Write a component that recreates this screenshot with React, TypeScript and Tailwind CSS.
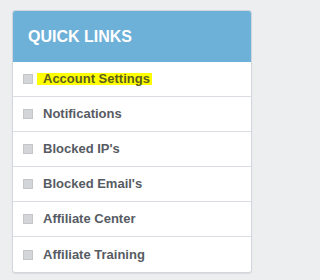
const links = [
  "Account Settings",
  "Notifications",
  "Blocked IP's",
  "Blocked Email's",
  "Affiliate Center",
  "Affiliate Training",
]

export default function App() {
  return (
    <div className="min-h-screen bg-[#eceef0] px-[12px] pt-[10px] font-['Liberation_Sans',Arial,sans-serif]">
      <div className="w-[240px] overflow-hidden rounded-[3px] border border-[#d3d6dc] bg-white shadow-[0_1px_1px_rgba(0,0,0,0.08)]">
        {/* Header */}
        <div className="flex h-[51px] items-center bg-[#6db0d8] pl-[15px]">
          <h3 className="text-[16px] font-bold text-white">QUICK LINKS</h3>
        </div>

        {/* Links */}
        <ul>
          {links.map((link, index) => (
            <li
              key={link}
              className={`flex h-[35px] items-center pl-[10px] ${index < links.length - 1 ? "border-b border-[#dcdde2]" : ""}`}
            >
              <span className="h-[10px] w-[10px] shrink-0 border border-[#c4c6ca] bg-[#d4d5d8]" />
              {index === 0 ? (
                <span className="ml-[4px] inline-block h-[12px] bg-[#ffff00] pl-[6px] pr-[2px] text-[13px] leading-[12px] font-bold text-[#5c5c1e]">
                  {link}
                </span>
              ) : (
                <span className="ml-[10px] text-[13px] font-bold text-[#565b63]">{link}</span>
              )}
            </li>
          ))}
        </ul>
      </div>
    </div>
  )
}
